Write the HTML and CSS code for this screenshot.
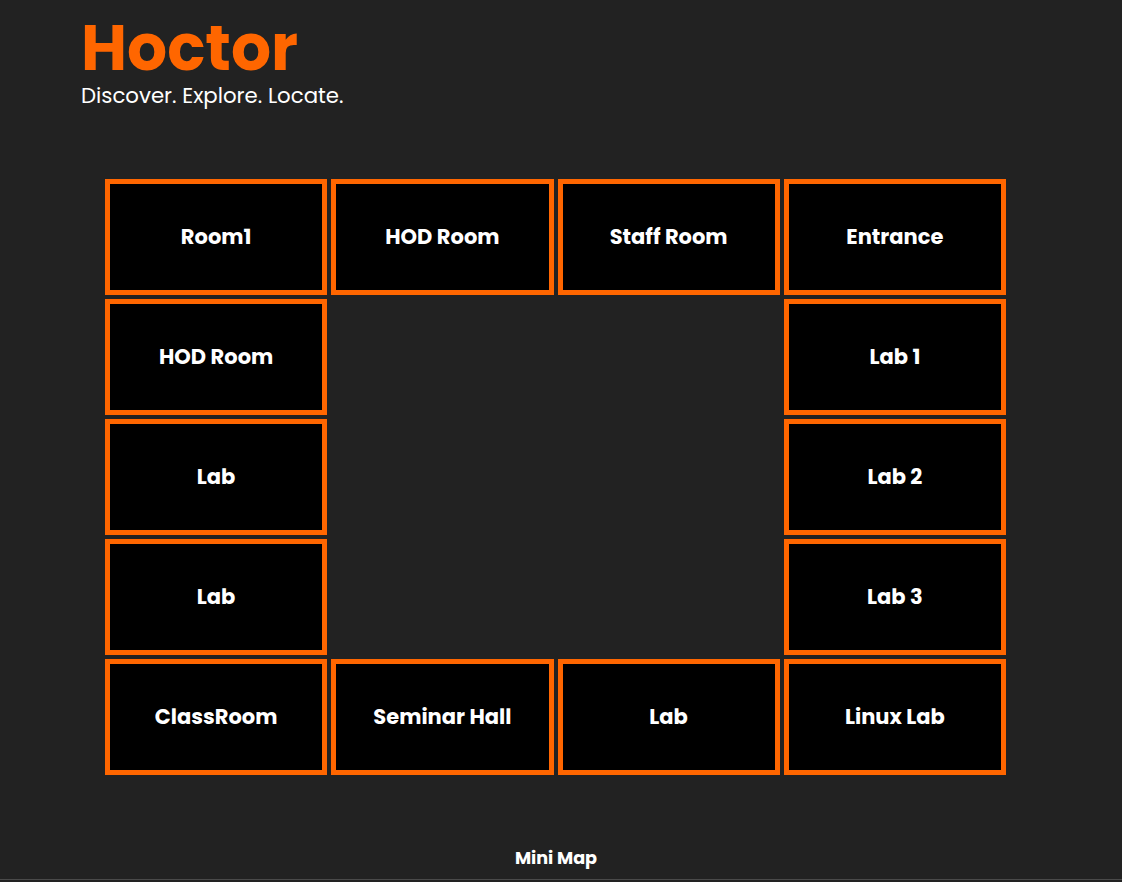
FILE: index.html
```html
<!DOCTYPE html>
<html lang="en">
<head>
<meta charset="utf-8">
<title>Hoctor</title>
<link rel="stylesheet" href="styles.css">
</head>
<body>
<header class="header">
  <h1 class="logo">Hoctor</h1>
  <p class="tagline">Discover. Explore. Locate.</p>
</header>
<main class="map">
  <div class="room">Room1</div>
  <div class="room">HOD Room</div>
  <div class="room">Staff Room</div>
  <div class="room">Entrance</div>

  <div class="room">HOD Room</div>
  <div class="void"></div>
  <div class="void"></div>
  <div class="room">Lab 1</div>

  <div class="room">Lab</div>
  <div class="void"></div>
  <div class="void"></div>
  <div class="room">Lab 2</div>

  <div class="room">Lab</div>
  <div class="void"></div>
  <div class="void"></div>
  <div class="room">Lab 3</div>

  <div class="room">ClassRoom</div>
  <div class="room">Seminar Hall</div>
  <div class="room">Lab</div>
  <div class="room">Linux Lab</div>
</main>
<footer class="footer">Mini Map</footer>
</body>
</html>
```
FILE: styles.css
```css
html, body {
  margin: 0;
  padding: 0;
  background: #222222;
  color: #ffffff;
  font-family: "Poppins", "Inter", "Noto Sans", sans-serif;
}
body {
  height: 882px;
  overflow: hidden;
  display: flex;
  flex-direction: column;
}
.header {
  padding: 12px 0 0 81px;
}
.logo {
  margin: 0;
  color: #ff6600;
  font-size: 63px;
  font-weight: 700;
  line-height: 72px;
}
.tagline {
  margin: 0;
  font-size: 21.3px;
  line-height: 24px;
  font-weight: 400;
}
.map {
  margin: 71px 0 0 105px;
  width: 901px;
  display: grid;
  grid-template-columns: repeat(4, 1fr);
  grid-template-rows: repeat(5, 116px);
  gap: 4px;
}
.room {
  box-sizing: border-box;
  background: #000000;
  border: 5px solid #ff6600;
  display: flex;
  align-items: center;
  justify-content: center;
  padding-bottom: 1px;
  font-weight: 700;
  font-size: 21px;
}
.footer {
  margin-top: auto;
  margin-bottom: 2px;
  height: 46px;
  box-sizing: border-box;
  border-bottom: 1px solid #4a4a4a;
  text-align: center;
  padding-right: 10px;
  font-weight: 700;
  font-size: 17.6px;
  line-height: 24px;
  padding-top: 12px;
}
```
